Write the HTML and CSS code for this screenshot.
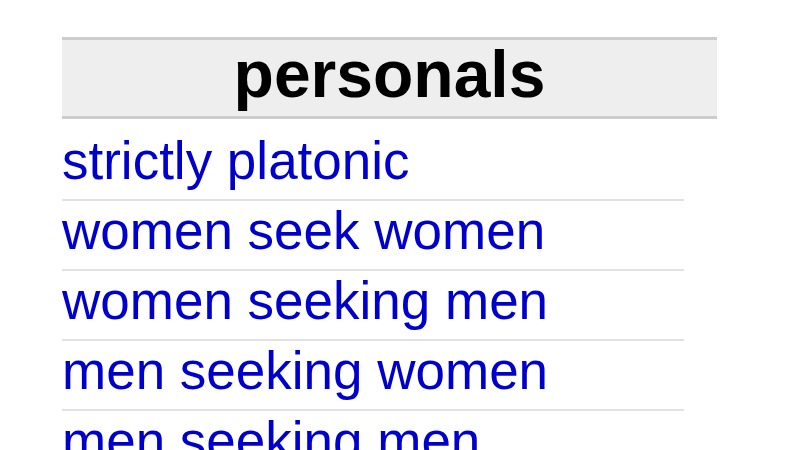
FILE: index.html
```html
<!DOCTYPE html>
<html>
<head>
<meta charset="utf-8">
<link rel="stylesheet" href="styles.css">
</head>
<body>
<div class="col">
  <h3 class="ban">personals</h3>
  <ul class="links">
    <li><a href="#">strictly platonic</a></li>
    <li><a href="#">women seek women</a></li>
    <li><a href="#">women seeking men</a></li>
    <li><a href="#">men seeking women</a></li>
    <li><a href="#">men seeking men</a></li>
  </ul>
</div>
</body>
</html>
```

FILE: styles.css
```css
html, body {
  margin: 0;
  padding: 0;
  background: #fff;
  height: 450px;
  overflow: hidden;
}
.col {
  margin: 37px 0 0 62px;
  width: 655px;
  font-family: "Liberation Sans", Arial, sans-serif;
}
.ban {
  margin: 0;
  background: #eeeeee;
  border-top: 3px solid #cccccc;
  border-bottom: 3px solid #cccccc;
  text-align: center;
  font-size: 66px;
  font-weight: bold;
  color: #000;
  line-height: 68px;
  height: 68px;
  padding-bottom: 8px;
}
.links {
  list-style: none;
  margin: 0;
  padding: 12px 0 0 0;
  width: 622px;
}
.links li {
  font-size: 53px;
  line-height: 59px;
  height: 59px;
  padding-bottom: 9px;
  border-bottom: 2px solid #e2e2e2;
}
.links a {
  color: #0000cc;
  text-decoration: none;
}
```
